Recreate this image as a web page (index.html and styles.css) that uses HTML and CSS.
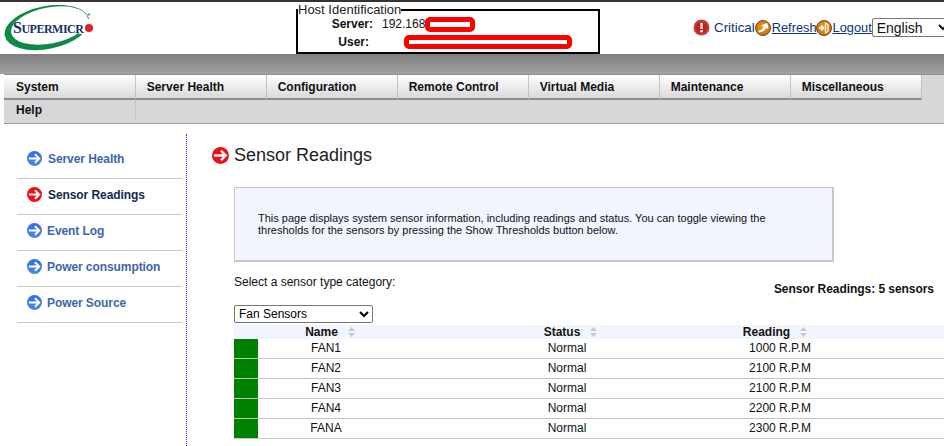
FILE: index.html
```html
<!DOCTYPE html>
<html lang="en">
<head>
<meta charset="utf-8">
<title>Sensor Readings</title>
<link rel="stylesheet" href="styles.css">
</head>
<body>
<svg class="sprite" width="0" height="0" aria-hidden="true">
  <defs>
    <linearGradient id="gb" x1="0" y1="0" x2="0" y2="1"><stop offset="0" stop-color="#2f6fe0"/><stop offset="1" stop-color="#4f86ea"/></linearGradient>
    <radialGradient id="go" cx="0.5" cy="0.45" r="0.6"><stop offset="0" stop-color="#f6a821"/><stop offset="1" stop-color="#b5680f"/></radialGradient>
    <radialGradient id="gr" cx="0.5" cy="0.5" r="0.55"><stop offset="0.55" stop-color="#c92a2a"/><stop offset="1" stop-color="#b05a5a"/></radialGradient>
    <symbol id="arrow" viewBox="0 0 16 16">
      <path d="M2 8H13M8.5 3.5L13 8L8.5 12.5" fill="none" stroke="#fff" stroke-width="2.2"/>
    </symbol>
  </defs>
</svg>
<div class="topline"></div>
<header class="header">
  <svg class="logo" width="92" height="46" viewBox="0 0 92 46" role="img" aria-label="Supermicro">
    <ellipse cx="46" cy="22.5" rx="43" ry="21.5" transform="rotate(-11 46 22.5)" fill="#0f8a46"/>
    <ellipse cx="48.5" cy="20.5" rx="39" ry="18" transform="rotate(-11 48.5 20.5)" fill="#fff"/>
    <rect x="78" y="14" width="14" height="15" fill="#fff"/>
    <text class="logo-text" x="12" y="28"><tspan class="logo-cap">S</tspan>UPERMICR</text>
    <circle cx="88" cy="23" r="4" fill="#e0202c"/>
    <circle cx="88" cy="9.5" r="1.2" fill="#7f93b5"/>
  </svg>
  <fieldset class="host">
    <legend class="host-legend">Host Identification</legend>
    <div class="host-row">
      <b class="host-label">Server:</b><span class="host-ip">192.168</span><span class="redact redact-ip"></span>
    </div>
    <div class="host-row host-row-user">
      <b class="host-label host-label-user">User:</b><span class="redact redact-user"></span>
    </div>
  </fieldset>
  <div class="actions">
    <svg class="ico-crit" width="17" height="17" viewBox="0 0 18 18"><circle cx="9" cy="9" r="8.5" fill="url(#gr)"/><circle cx="9" cy="9" r="6" fill="#c6201f"/><path d="M9 4V10.5" stroke="#fff" stroke-width="2.4"/><circle cx="9" cy="13" r="1.4" fill="#fff"/></svg>
    <span class="crit-label">Critical</span>
    <svg class="ico-act" width="16" height="16" viewBox="0 0 16 16"><circle cx="8" cy="8" r="7.5" fill="url(#go)" stroke="#7a4a12"/><path d="M3.5 11.5C6 11.5 9 10 10.5 6.5M7.5 6L11.5 4.5L12.5 8.5" fill="none" stroke="#fff" stroke-width="2.2"/></svg>
    <a class="act-link" href="#">Refresh</a>
    <svg class="ico-act ico-logout" width="16" height="16" viewBox="0 0 16 16"><circle cx="8" cy="8" r="7.5" fill="url(#go)" stroke="#7a4a12"/><path d="M3 8H6.5M5 5.5L7.5 8L5 10.5" fill="none" stroke="#fff" stroke-width="1.6"/><path d="M9.5 3L12 4.5V11.5L9.5 13Z" fill="none" stroke="#fff" stroke-width="1.2"/></svg>
    <a class="act-link" href="#">Logout</a>
    <select class="lang"><option>English</option></select>
  </div>
</header>
<div class="band"></div>
<nav class="nav">
  <a class="tab tab-first" href="#">System</a>
  <a class="tab" href="#">Server Health</a>
  <a class="tab" href="#">Configuration</a>
  <a class="tab" href="#">Remote Control</a>
  <a class="tab" href="#">Virtual Media</a>
  <a class="tab" href="#">Maintenance</a>
  <a class="tab" href="#">Miscellaneous</a>
  <a class="tab tab-sub" href="#">Help</a>
</nav>
<div class="main">
  <aside class="side">
    <ul class="side-list">
      <li class="side-item"><svg class="bullet" viewBox="0 0 16 16"><circle cx="8" cy="8" r="8" fill="url(#gb)"/><use href="#arrow"/></svg><a class="side-link" href="#">Server Health</a></li>
      <li class="side-item"><svg class="bullet" viewBox="0 0 16 16"><circle cx="8" cy="8" r="8" fill="#ee0f14"/><use href="#arrow"/></svg><a class="side-link side-current" href="#">Sensor Readings</a></li>
      <li class="side-item"><svg class="bullet" viewBox="0 0 16 16"><circle cx="8" cy="8" r="8" fill="url(#gb)"/><use href="#arrow"/></svg><a class="side-link side-tight" href="#">Event Log</a></li>
      <li class="side-item"><svg class="bullet" viewBox="0 0 16 16"><circle cx="8" cy="8" r="8" fill="url(#gb)"/><use href="#arrow"/></svg><a class="side-link side-tight" href="#">Power consumption</a></li>
      <li class="side-item"><svg class="bullet" viewBox="0 0 16 16"><circle cx="8" cy="8" r="8" fill="url(#gb)"/><use href="#arrow"/></svg><a class="side-link side-tight" href="#">Power Source</a></li>
    </ul>
  </aside>
  <section class="content">
    <h1 class="title"><svg class="title-ico" viewBox="0 0 16 16"><circle cx="8" cy="8" r="8" fill="#ee0f14"/><use href="#arrow"/></svg>Sensor Readings</h1>
    <div class="body">
      <div class="info">This page displays system sensor information, including readings and status. You can toggle viewing the<br>thresholds for the sensors by pressing the Show Thresholds button below.</div>
      <div class="filter">
        <div class="filter-left">
          <label class="filter-label" for="cat">Select a sensor type category:</label>
          <select class="cat" id="cat"><option>Fan Sensors</option></select>
        </div>
        <div class="count">Sensor Readings: 5 sensors</div>
      </div>
      <table class="sensors">
        <thead>
          <tr>
            <th class="c-flag"></th>
            <th class="c-name">Name<svg class="sort" viewBox="0 0 7 10"><path d="M3.5 0L7 4H0ZM3.5 10L0 6H7Z"/></svg></th>
            <th class="c-status">Status<svg class="sort" viewBox="0 0 7 10"><path d="M3.5 0L7 4H0ZM3.5 10L0 6H7Z"/></svg></th>
            <th class="c-reading">Reading<svg class="sort" viewBox="0 0 7 10"><path d="M3.5 0L7 4H0ZM3.5 10L0 6H7Z"/></svg></th>
            <th class="c-rest"></th>
          </tr>
        </thead>
        <tbody>
          <tr><td class="flag"></td><td>FAN1</td><td>Normal</td><td>1000 R.P.M</td><td></td></tr>
          <tr><td class="flag"></td><td>FAN2</td><td>Normal</td><td>2100 R.P.M</td><td></td></tr>
          <tr><td class="flag"></td><td>FAN3</td><td>Normal</td><td>2100 R.P.M</td><td></td></tr>
          <tr><td class="flag"></td><td>FAN4</td><td>Normal</td><td>2200 R.P.M</td><td></td></tr>
          <tr><td class="flag"></td><td>FANA</td><td>Normal</td><td>2300 R.P.M</td><td></td></tr>
        </tbody>
      </table>
    </div>
  </section>
</div>
</body>
</html>
```
FILE: styles.css
```css
* { box-sizing: border-box; }
html, body { margin: 0; padding: 0; height: 100%; }
body { width: 944px; height: 446px; overflow: hidden; background: #fff; color: #111; font-family: "Liberation Sans", Arial, sans-serif; font-size: 12px; }
.sprite { display: block; height: 0; }
a { text-decoration: none; }

.topline { height: 2px; background: #333; }

.header { height: 52px; display: flex; position: relative; }
.logo { flex: none; margin: 3px 0 0 1px; }
.logo-text { font-family: "Liberation Serif", serif; font-size: 12px; font-weight: 700; fill: #18306e; letter-spacing: -0.5px; }
.logo-cap { font-size: 16px; }

.host { flex: none; width: 304px; height: 50px; margin: 2px 0 0 203px; padding: 0; border: 2px solid #000; min-width: 0; }
.host-legend { padding: 0; margin-left: 0; font-size: 13px; line-height: 12px; height: 12px; color: #222; }
.host-row { display: flex; align-items: center; height: 16px; }
.host-row-user { margin-top: 2px; }
.host-label { width: 75px; text-align: right; font-size: 12px; }
.host-label-user { width: 71px; }
.host-ip { margin-left: 9px; }
.redact { display: block; background: #fff; border: 5px solid #f00; border-radius: 5px; }
.redact-ip { width: 50px; height: 15px; margin-left: 0; }
.redact-user { width: 168px; height: 14px; margin-left: 35px; }

.actions { position: absolute; left: 693px; top: 16px; display: flex; align-items: center; white-space: nowrap; }
.ico-crit { flex: none; margin-right: 4px; }
.crit-label { color: #12307a; font-size: 13.33px; }
.ico-act { flex: none; }
.ico-logout { margin-left: -1px; }
.act-link { margin-left: 1px; color: #12307a; text-decoration: underline; font-size: 12.8px; }
.lang { width: 80px; height: 19px; font-family: "Liberation Sans", Arial, sans-serif; font-size: 14px; background: #fff; border: 1px solid #767676; border-radius: 2px; color: #111; }

.band { height: 20px; background: linear-gradient(#7f7f7f, #a2a2a2); }

.nav { margin-left: 4px; height: 50px; display: grid; grid-template-columns: 132px repeat(6, 131px); grid-auto-rows: 25px; align-content: start; background: #d7d7d9; border-top: 1px solid #8e8e8e; border-bottom: 1px solid #9a9a9a; }
.tab { display: flex; align-items: center; padding-left: 10.7px; font-weight: 700; color: #111; height: 25px; background: linear-gradient(#fff, #d9d9db); border-right: 1px solid #c4c4c6; border-bottom: 2px solid #8c8c8c; }
.tab-first { padding-left: 12px; }
.tab-sub { padding-left: 12px; background: none; border-bottom: 0; height: 20px; }

.main { display: flex; height: 322px; }
.side { flex: none; width: 187px; margin-top: 10px; border-right: 1px dotted #1a3cff; }
.side-list { list-style: none; margin: 9px 0 0 17px; padding: 0; width: 165px; }
.side-item { height: 36px; display: flex; align-items: center; padding: 0 0 4px 10px; border-bottom: 1px solid #c8c8c8; }
.bullet { flex: none; width: 15px; height: 15px; margin-right: 6px; }
.side-link { color: #3e66a8; font-weight: 700; letter-spacing: -0.08px; }
.side-tight { margin-left: -1px; }
.side-current { color: #14284f; }

.content { flex: 1; min-width: 0; padding-left: 25px; }
.title { display: flex; align-items: center; margin: 0; padding-top: 20px; height: 43px; font-size: 18px; font-weight: 400; color: #222; }
.title-ico { flex: none; width: 17px; height: 17px; margin-right: 5px; }
.body { padding-left: 22px; }
.info { width: 600px; height: 75px; margin-top: 20px; padding: 24px 23px 0; background: #f1f5fe; border: 1px solid #c8c8cc; border-width: 1px 2px 2px 1px; font-size: 11px; line-height: 12px; }
.filter { display: flex; justify-content: space-between; width: 700px; margin-top: 13px; height: 50px; }
.filter-left { display: flex; flex-direction: column; }
.filter-label { line-height: 14px; height: 30px; }
.cat { width: 139px; height: 18px; font-family: "Liberation Sans", Arial, sans-serif; font-size: 12px; background: #fff; border: 1px solid #767676; border-radius: 2px; }
.count { font-weight: 700; margin-top: 7px; line-height: 14px; letter-spacing: -0.05px; }
.sensors { width: 710px; table-layout: fixed; border-collapse: separate; border-spacing: 0; }
.sensors th { height: 14px; padding: 0; background: #f1f5fe; font-weight: 700; font-size: 12px; line-height: 14px; }
.sensors td { height: 20px; padding: 0 0 1px; text-align: center; border-bottom: 1px solid #c4c4c4; line-height: 14px; }
.c-flag { width: 24px; }
.c-name { width: 136px; padding-left: 8px !important; }
.c-status { width: 346px; padding-left: 7px !important; }
.c-reading { width: 80px; padding-right: 10px !important; }
.sensors td.flag { background: #008000; background-clip: padding-box; }
.sort { width: 7px; height: 10px; margin-left: 10px; fill: #c6c9ce; vertical-align: -1px; }
```
